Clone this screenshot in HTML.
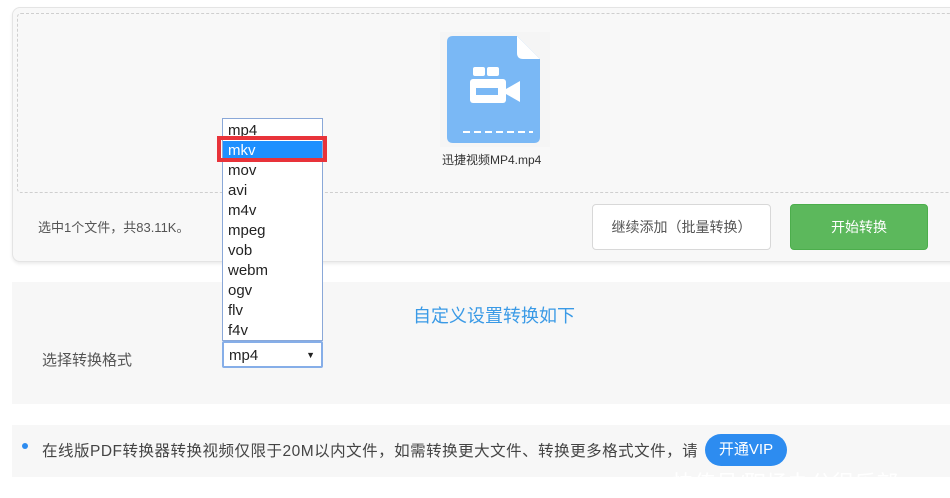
<!DOCTYPE html>
<html><head><meta charset="utf-8"><style>
*{margin:0;padding:0;box-sizing:border-box}
body{width:950px;height:495px;background:#fff;font-family:"Liberation Sans","Noto Sans CJK SC",sans-serif;position:relative;overflow:hidden;color:#333}
.card{position:absolute;left:12px;top:7px;width:950px;height:255px;background:#f8f8f8;border:1px solid #e4e4e4;border-radius:8px;box-shadow:0 2px 3px rgba(0,0,0,.08)}
.dash{position:absolute;left:17px;top:13px;width:940px;height:180px;border:1px dashed #cfcfcf;border-radius:4px}
.abs{position:absolute}
.btn1{left:592px;top:204px;width:179px;height:46px;background:#fff;border:1px solid #d8d8d8;border-radius:4px;font-size:14px;color:#555;text-align:center;line-height:44px}
.btn2{left:790px;top:204px;width:138px;height:46px;background:#5cb85c;border:1px solid #4cae4c;border-radius:4px;font-size:14px;color:#fff;text-align:center;line-height:44px}
.sec{left:12px;top:282px;width:940px;height:122px;background:#f7f7f7}
.sec3{left:12px;top:425px;width:940px;height:52px;background:#f7f7f7}
.list{left:222px;top:118px;width:101px;height:223px;background:#fff;border:1px solid #8aa8d8;padding-top:2px}
.list div{height:20px;line-height:20px;font-size:15px;padding-left:5px;color:#222}
.sel{left:222px;top:341px;width:101px;height:27px;background:#fff;border:2px solid #86aee8;border-radius:2px;font-size:15px;line-height:25px;padding-left:5px;color:#222}
</style></head><body>
<div class="card"></div>
<div class="dash"></div>
<svg class="abs" style="left:440px;top:32px" width="110" height="115" viewBox="0 0 110 115">
<rect x="0" y="0" width="110" height="115" fill="#f5f5f5"/>
<path d="M13 4 H77 L100 27 V105 Q100 111 94 111 H13 Q7 111 7 105 V10 Q7 4 13 4Z" fill="#7ab8f5"/>
<path d="M77 4 L100 27 H83 Q77 27 77 21Z" fill="#fff"/>
<rect x="33" y="35" width="12" height="9" rx="2" fill="#fff"/>
<rect x="47" y="35" width="12" height="9" rx="2" fill="#fff"/>
<rect x="30" y="47" width="36" height="24" rx="3" fill="#fff"/>
<rect x="36" y="56" width="22" height="7" fill="#7ab8f5"/>
<path d="M66 57 L80 49 V70 L66 62Z" fill="#fff"/>
<path d="M23 100 H93" stroke="#fff" stroke-width="2" stroke-dasharray="7 4"/>
</svg>
<div class="abs" style="left:442px;top:151px;font-size:12px;color:#333">迅捷视频MP4.mp4</div>
<div class="abs" style="left:38px;top:217px;font-size:13px;color:#555">选中1个文件，共83.11K。</div>
<div class="abs btn1">继续添加（批量转换）</div>
<div class="abs btn2">开始转换</div>
<div class="abs sec"></div>
<div class="abs" style="left:413px;top:302px;font-size:18px;color:#3a9ae6">自定义设置转换如下</div>
<div class="abs" style="left:42px;top:349px;font-size:15px;color:#555">选择转换格式</div>
<div class="abs sec3"></div>
<div class="abs" style="left:22px;top:443px;width:6px;height:6px;border-radius:50%;background:#2d8cf0"></div>
<div class="abs" style="left:42px;top:439px;font-size:15.5px;letter-spacing:0.5px;color:#444;white-space:nowrap">在线版PDF转换器转换视频仅限于20M以内文件，如需转换更大文件、转换更多格式文件，请</div>
<div class="abs" style="left:705px;top:434px;width:82px;height:32px;border-radius:16px;background:#2d8cf0;color:#fff;font-size:15px;text-align:center;line-height:32px">开通VIP</div>
<div class="abs" style="left:672px;top:466px;font-size:22px;color:#fff;white-space:nowrap">快传号/职场办公很乐部</div>
<div class="abs list">
<div>mp4</div><div style="background:#1e90ff;color:#fff">mkv</div><div>mov</div><div>avi</div><div>m4v</div><div>mpeg</div><div>vob</div><div>webm</div><div>ogv</div><div>flv</div><div>f4v</div>
</div>
<div class="abs" style="left:217px;top:136px;width:110px;height:26px;border:4px solid #e8333a"></div>
<div class="abs sel">mp4<span style="position:absolute;right:6px;top:0;font-size:9px">▼</span></div>
</body></html>
